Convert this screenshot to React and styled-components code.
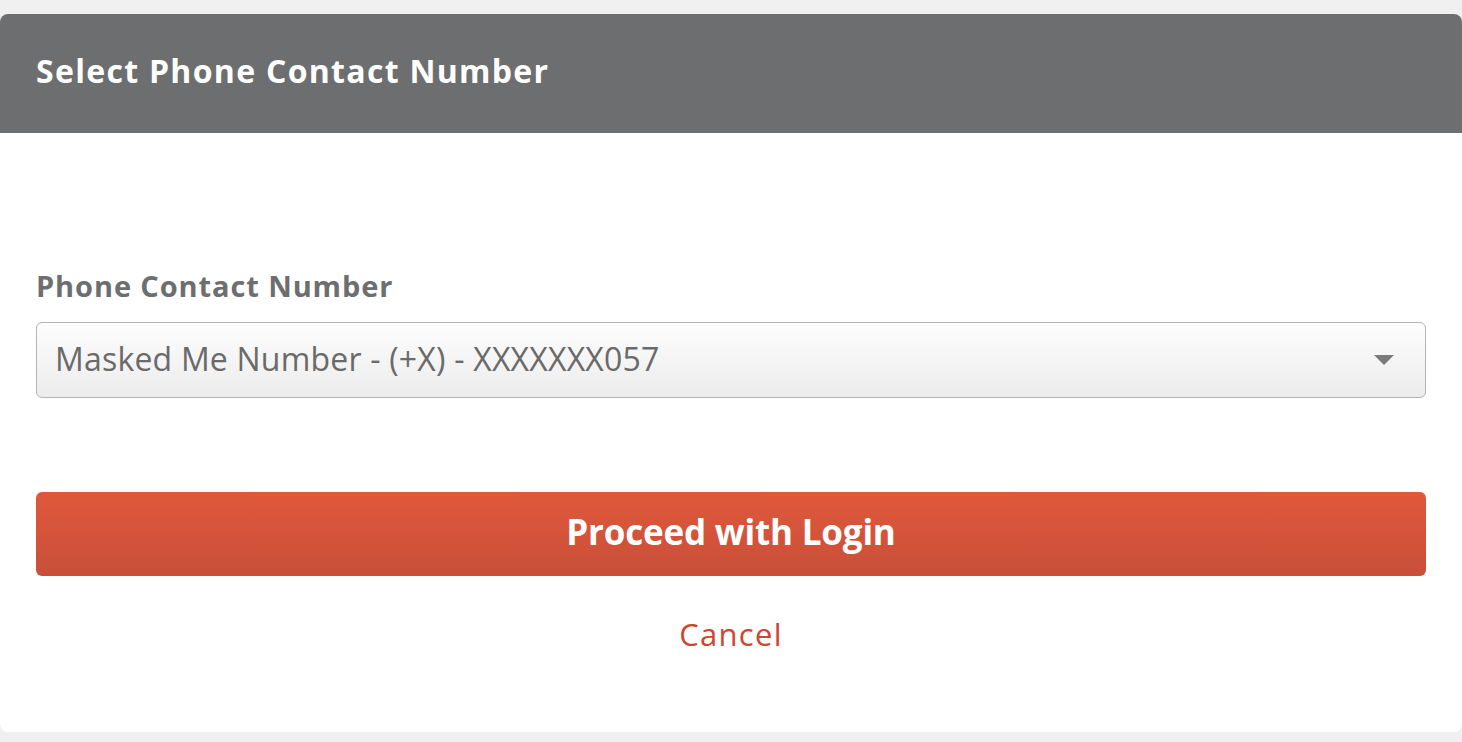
import React from 'react'
import styled, { createGlobalStyle } from 'styled-components'

const Global = createGlobalStyle`
  html, body {
    margin: 0;
    padding: 0;
    background: #f0f0f0;
    font-family: 'Open Sans', Lato, sans-serif;
  }
`

const Page = styled.div`
  padding-top: 14px;
  height: 742px;
  box-sizing: border-box;
`

const Card = styled.div`
  background: #fff;
  border-radius: 8px;
  height: 718px;
  overflow: hidden;
  display: flex;
  flex-direction: column;
`

const Header = styled.div`
  background: #6d6e70;
  height: 119px;
  display: flex;
  align-items: center;
  padding: 0 36px 6px;
  box-sizing: border-box;
`

const Title = styled.h1`
  margin: 0;
  color: #fff;
  font-size: 32px;
  font-weight: 700;
  line-height: 40px;
  letter-spacing: 1.3px;
`

const Body = styled.div`
  padding: 136px 36px 0;
  display: flex;
  flex-direction: column;
`

const Label = styled.label`
  color: #6d6e70;
  font-size: 29px;
  font-weight: 700;
  line-height: 34px;
  letter-spacing: 0.9px;
  margin-bottom: 19px;
`

const Select = styled.div`
  height: 76px;
  box-sizing: border-box;
  border: 1px solid #b3b3b3;
  border-radius: 6px;
  background: linear-gradient(#fdfdfd, #ececec);
  display: flex;
  align-items: center;
  justify-content: space-between;
  padding: 0 31px 4px 18px;
  color: #6a6a6a;
  font-size: 32px;
  letter-spacing: 0.2px;
`

const Arrow = styled.span`
  margin-top: 4px;
  width: 0;
  height: 0;
  border-left: 10px solid transparent;
  border-right: 10px solid transparent;
  border-top: 10px solid #7a7a7a;
`

const Button = styled.button`
  margin-top: 94px;
  height: 84px;
  padding: 0 0 5px;
  border: none;
  border-radius: 6px;
  background: linear-gradient(#e0583c, #c84f38);
  color: #fff;
  font-family: inherit;
  font-size: 35px;
  font-weight: 700;
  letter-spacing: -0.2px;
  cursor: pointer;
`

const Cancel = styled.a`
  align-self: center;
  margin-top: 38px;
  color: #d0452e;
  font-size: 31px;
  line-height: 40px;
  letter-spacing: 1.3px;
  cursor: pointer;
`

export default function App() {
  return (
    <Page>
      <Global />
      <Card>
        <Header>
          <Title>Select Phone Contact Number</Title>
        </Header>
        <Body>
          <Label>Phone Contact Number</Label>
          <Select>
            <span>Masked Me Number - (+X) - XXXXXXX057</span>
            <Arrow />
          </Select>
          <Button>Proceed with Login</Button>
          <Cancel>Cancel</Cancel>
        </Body>
      </Card>
    </Page>
  )
}
